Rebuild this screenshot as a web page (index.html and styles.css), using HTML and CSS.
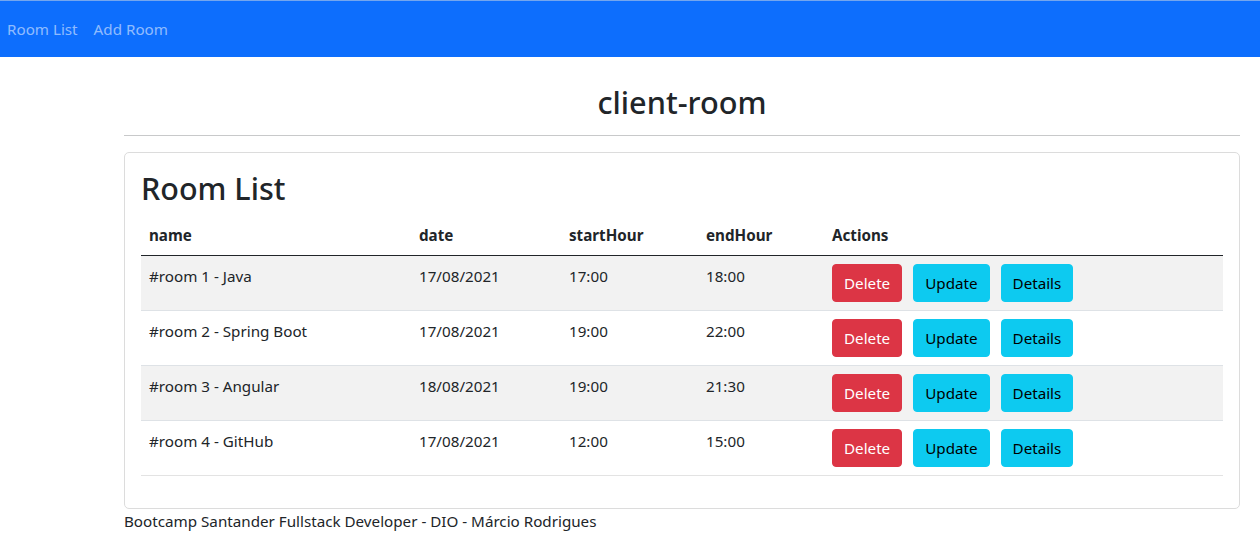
FILE: index.html
```html
<!DOCTYPE html>
<html lang="en">
<head>
<meta charset="utf-8">
<title>client-room</title>
<link rel="stylesheet" href="styles.css">
</head>
<body>
<nav class="navbar">
  <a class="nav-link" href="#">Room List</a>
  <a class="nav-link" href="#">Add Room</a>
</nav>
<main class="container">
  <h2 class="app-title">client-room</h2>
  <hr class="divider">
  <section class="card">
    <h2 class="card-title">Room List</h2>
    <table class="table">
      <colgroup>
        <col class="c-name"><col class="c-date"><col class="c-start"><col class="c-end"><col class="c-actions">
      </colgroup>
      <thead>
        <tr><th>name</th><th>date</th><th>startHour</th><th>endHour</th><th>Actions</th></tr>
      </thead>
      <tbody>
        <tr class="striped"><td>#room 1 - Java</td><td>17/08/2021</td><td>17:00</td><td>18:00</td><td><div class="actions"><button class="btn btn-danger">Delete</button><button class="btn btn-info">Update</button><button class="btn btn-info">Details</button></div></td></tr>
        <tr><td>#room 2 - Spring Boot</td><td>17/08/2021</td><td>19:00</td><td>22:00</td><td><div class="actions"><button class="btn btn-danger">Delete</button><button class="btn btn-info">Update</button><button class="btn btn-info">Details</button></div></td></tr>
        <tr class="striped"><td>#room 3 - Angular</td><td>18/08/2021</td><td>19:00</td><td>21:30</td><td><div class="actions"><button class="btn btn-danger">Delete</button><button class="btn btn-info">Update</button><button class="btn btn-info">Details</button></div></td></tr>
        <tr><td>#room 4 - GitHub</td><td>17/08/2021</td><td>12:00</td><td>15:00</td><td><div class="actions"><button class="btn btn-danger">Delete</button><button class="btn btn-info">Update</button><button class="btn btn-info">Details</button></div></td></tr>
      </tbody>
    </table>
  </section>
  <footer class="footer">Bootcamp Santander Fullstack Developer - DIO - Márcio Rodrigues</footer>
</main>
</body>
</html>
```
FILE: styles.css
```css
* { box-sizing: border-box; }
html, body {
  margin: 0;
  padding: 0;
  background: #fff;
  color: #212529;
  font-family: "Noto Sans", "Open Sans", sans-serif;
  font-size: 15.2px;
  line-height: 24px;
}
.navbar {
  height: 57px;
  background: #0d6efd;
  border-top: 1px solid #74a6ee;
  display: flex;
  align-items: center;
  gap: 16px;
  padding: 0 7px;
}
.nav-link {
  color: rgba(255, 255, 255, 0.55);
  text-decoration: none;
}
.container {
  width: 1116px;
  margin: 0 0 0 124px;
}
.app-title {
  margin: 26px 0 14px;
  text-align: center;
  font-size: 30.7px;
  font-weight: 500;
  line-height: 38px;
}
.divider {
  margin: 0 0 16px;
  border: 0;
  border-top: 1px solid #c8c9ca;
}
.card {
  border: 1px solid #dcdcdc;
  border-radius: 5px;
  padding: 16px 16px;
}
.card-title {
  margin: 0 0 8px;
  font-size: 30.5px;
  font-weight: 500;
  line-height: 38px;
}
.table {
  width: 100%;
  border-collapse: collapse;
  table-layout: fixed;
  margin: 0 0 16px;
}
.c-name { width: 270px; }
.c-date { width: 150px; }
.c-start { width: 137px; }
.c-end { width: 126px; }
.table th {
  text-align: left;
  font-weight: 700;
  padding: 8px 8px;
  border-bottom: 1px solid #212529;
}
.table td {
  padding: 8px 8px;
  border-bottom: 1px solid #dee2e6;
  vertical-align: top;
}
.table tbody tr:last-child td { border-bottom-color: #e3e3e3; }
.striped td { background: #f2f2f2; }
.actions {
  display: flex;
  gap: 11px;
}
.btn {
  font-family: inherit;
  font-size: 15.2px;
  line-height: 24px;
  padding: 6px 11px;
  border: 1px solid transparent;
  border-radius: 4px;
  cursor: pointer;
}
.btn-danger { background: #dc3545; border-color: #dc3545; color: #fff; }
.btn-info { background: #0dcaf0; border-color: #0dcaf0; color: #000; }
.footer {
  margin: 0;
  padding: 0;
}
```
